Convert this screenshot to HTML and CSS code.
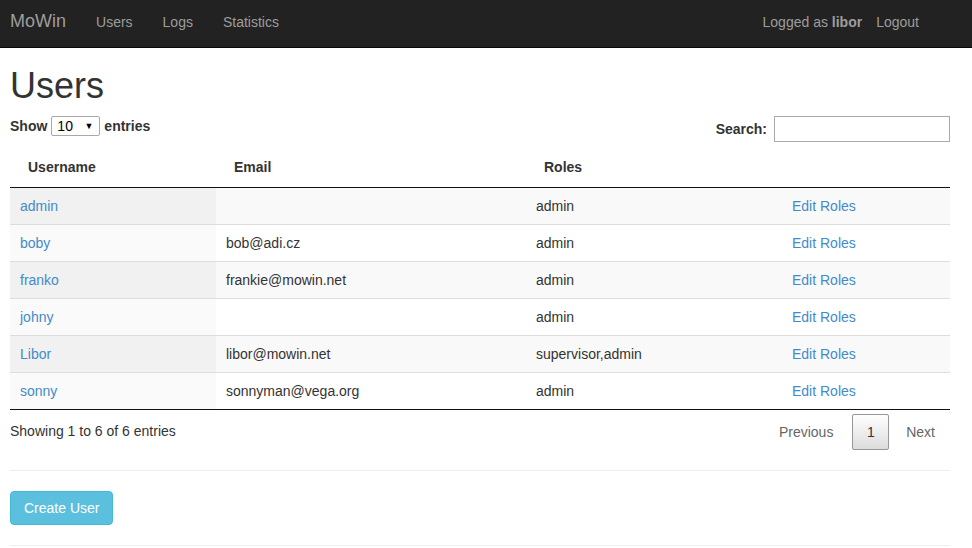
FILE: index.html
```html
<!DOCTYPE html>
<html>
<head>
<meta charset="utf-8">
<title>MoWin - Users</title>
<link rel="stylesheet" href="styles.css">
</head>
<body>
<nav class="navbar">
  <div class="nav-left">
    <a class="brand" href="#">MoWin</a>
    <a class="nav-link" href="#">Users</a>
    <a class="nav-link" href="#">Logs</a>
    <a class="nav-link" href="#">Statistics</a>
  </div>
  <div class="nav-right">
    <span class="nav-text">Logged as <b>libor</b></span>
    <a class="nav-link logout" href="#">Logout</a>
  </div>
</nav>
<main class="container">
  <h1 class="title">Users</h1>
  <div class="dt-wrapper">
    <div class="dt-top">
      <label class="dt-length">Show
        <span class="select-wrap">
          <select class="dt-select"><option>10</option><option>25</option><option>50</option><option>100</option></select>
          <span class="select-arrow">▼</span>
        </span>
        entries</label>
      <label class="dt-filter">Search:<input class="dt-input" type="search"></label>
    </div>
    <table class="dt-table">
      <thead>
        <tr><th class="c1">Username</th><th class="c2">Email</th><th class="c3">Roles</th><th class="c4"></th></tr>
      </thead>
      <tbody>
        <tr class="odd"><td class="sorted"><a href="#">admin</a></td><td></td><td>admin</td><td><a href="#">Edit Roles</a></td></tr>
        <tr class="even"><td class="sorted"><a href="#">boby</a></td><td>bob@adi.cz</td><td>admin</td><td><a href="#">Edit Roles</a></td></tr>
        <tr class="odd"><td class="sorted"><a href="#">franko</a></td><td>frankie@mowin.net</td><td>admin</td><td><a href="#">Edit Roles</a></td></tr>
        <tr class="even"><td class="sorted"><a href="#">johny</a></td><td></td><td>admin</td><td><a href="#">Edit Roles</a></td></tr>
        <tr class="odd"><td class="sorted"><a href="#">Libor</a></td><td>libor@mowin.net</td><td>supervisor,admin</td><td><a href="#">Edit Roles</a></td></tr>
        <tr class="even"><td class="sorted"><a href="#">sonny</a></td><td>sonnyman@vega.org</td><td>admin</td><td><a href="#">Edit Roles</a></td></tr>
      </tbody>
    </table>
    <div class="dt-bottom">
      <div class="dt-info">Showing 1 to 6 of 6 entries</div>
      <div class="dt-paginate">
        <a class="page-btn disabled">Previous</a>
        <a class="page-btn current">1</a>
        <a class="page-btn disabled">Next</a>
      </div>
    </div>
  </div>
  <hr class="sep">
  <a class="btn-info" href="#">Create User</a>
  <hr class="sep">
</main>
</body>
</html>
```
FILE: styles.css
```css
* { box-sizing: border-box; }
html, body { margin: 0; padding: 0; }
body {
  font-family: "Liberation Sans", Arial, sans-serif;
  font-size: 14px;
  line-height: 20px;
  color: #333;
  background: #fff;
}
a { color: #428bca; text-decoration: none; }

.navbar {
  height: 48px;
  background: #222;
  border-bottom: 1px solid #080808;
  display: flex;
  justify-content: space-between;
  align-items: flex-start;
  padding: 0 10px;
}
.nav-left, .nav-right { display: flex; align-items: flex-start; }
.brand {
  font-size: 18px;
  line-height: 20px;
  color: #9d9d9d;
  padding: 11px 15px 0 0;
}
.nav-link {
  color: #9d9d9d;
  padding: 12px 15px 0 15px;
}
.nav-text { color: #9d9d9d; padding-top: 12px; margin-right: -1px; }
.nav-text b { font-weight: 700; }
.logout { padding-right: 43px; }

.container { width: 940px; margin: 0 10px; }
.title {
  font-size: 36px;
  font-weight: 500;
  line-height: 39.6px;
  margin: 18px 0 10px 0;
  color: #333;
}

.dt-top {
  display: flex;
  justify-content: space-between;
  align-items: flex-start;
}
.dt-length { font-weight: 700; display: flex; align-items: center; line-height: 20px; }
.select-wrap { position: relative; display: inline-block; margin: 0 4px 0 4px; }
.dt-select {
  -webkit-appearance: none;
  appearance: none;
  width: 49px;
  height: 20px;
  border: 1px solid #a9a9a9;
  border-radius: 2px;
  background: #fff;
  font-family: "Liberation Sans", Arial, sans-serif;
  font-size: 14px;
  color: #000;
  padding: 0 0 0 5px;
  margin: 0;
  display: block;
}
.select-arrow {
  position: absolute;
  right: 7px;
  top: 0;
  font-size: 9px;
  line-height: 20px;
  color: #000;
  pointer-events: none;
}
.dt-filter { font-weight: 700; display: flex; align-items: center; line-height: 26px; }
.dt-input {
  width: 176px;
  height: 26px;
  border: 1px solid #aaa;
  border-radius: 0;
  margin-left: 7px;
  padding: 4px;
  font-size: 14px;
}

.dt-table {
  width: 940px;
  border-collapse: collapse;
  margin-top: 5px;
  table-layout: fixed;
}
.dt-table th {
  text-align: left;
  font-weight: 700;
  padding: 10px 18px;
  border-bottom: 1px solid #111;
}
.c1 { width: 206px; }
.c2 { width: 310px; }
.c3 { width: 256px; }
.c4 { width: 168px; }
.dt-table td {
  padding: 8px 10px;
  height: 36px;
  border-top: 1px solid #ddd;
}
.dt-table tbody tr:first-child td { border-top: none; }
.dt-table tbody tr:last-child { border-bottom: 1px solid #111; }
.dt-table tr.odd td { background: #f9f9f9; }
.dt-table tr.odd td.sorted { background: #f1f1f1; }
.dt-table tr.even td { background: #fff; }
.dt-table tr.even td.sorted { background: #fafafa; }

.dt-bottom { display: flex; justify-content: space-between; align-items: flex-start; }
.dt-info { padding-top: 11px; }
.dt-paginate { padding-top: 4px; display: flex; }
.page-btn {
  display: inline-block;
  padding: 7px 14px;
  border: 1px solid transparent;
  border-radius: 2px;
  margin-left: 2px;
  color: #666;
  min-width: 21px;
  text-align: center;
  line-height: 20px;
}
.page-btn.current {
  color: #333;
  border: 1px solid #979797;
  background: linear-gradient(to bottom, #fff 0%, #dcdcdc 100%);
  margin-left: 4px;
  padding: 7px 13.5px;
}

.sep {
  border: 0;
  border-top: 1px solid #eee;
  margin: 20px 0;
  height: 0;
}
.btn-info {
  display: inline-block;
  padding: 6px 13px;
  line-height: 20px;
  font-size: 14px;
  color: #fff;
  background: #5bc0de;
  border: 1px solid #46b8da;
  border-radius: 4px;
}
```
